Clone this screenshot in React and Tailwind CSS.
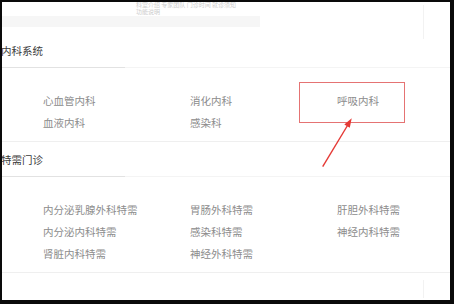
import React from 'react';

const font = { fontFamily: '"Noto Sans CJK SC", "Noto Sans", sans-serif' };

const sections = [
  {
    title: '内科系统',
    headClass: 'h-[27px] pt-[5px]',
    items: ['心血管内科', '消化内科', '呼吸内科', '血液内科', '感染科'],
  },
  {
    title: '特需门诊',
    headClass: 'h-[34px] pt-[12px]',
    items: [
      '内分泌乳腺外科特需',
      '胃肠外科特需',
      '肝胆外科特需',
      '内分泌内科特需',
      '感染科特需',
      '神经内科特需',
      '肾脏内科特需',
      '神经外科特需',
    ],
  },
];

const Section = ({ title, headClass, items }) => (
  <div className="border-b border-[#efefef]">
    {/* Heading */}
    <div className={headClass}>
      <div className="-ml-px text-[10.5px] leading-[12px] text-[#3a3a3a]">{title}</div>
    </div>
    <div className="flex h-px">
      <div className="w-[123px] bg-[#e2e2e2]" />
      <div className="flex-1 bg-[#f4f4f4]" />
    </div>

    {/* Items */}
    <div className="grid grid-cols-[147px_147px_1fr] pl-[41px] pt-[22px] pb-[7px]">
      {items.map((item) => (
        <div key={item} className="text-[10.5px] leading-[22px] text-[#8c8c8c] whitespace-nowrap">
          {item}
        </div>
      ))}
    </div>
  </div>
);

export default function App() {
  return (
    <div className="w-[454px] h-[304px] bg-[#0a0a0a] pt-[2px] pl-[2px] pr-[4px] pb-[4px]" style={font}>
      <div className="relative w-full h-full bg-white overflow-hidden">
        {/* Top faint area */}
        <div className="h-[38px]">
          <div className="h-[14px] pl-[134px] flex flex-col gap-px text-[6px] leading-[6px] text-[#cdcdcd]">
            <div>科室介绍 专家团队 门诊时间 就诊须知</div>
            <div>功能说明</div>
          </div>
          <div className="w-[258px] h-[11px] bg-[#f6f6f6]" />
        </div>

        {sections.map((s) => (
          <Section key={s.title} {...s} />
        ))}

        {/* faint vertical rules */}
        <div className="absolute left-[421px] top-[3px] w-px h-[34px] bg-[#f2f2f2]" />
        <div className="absolute left-[421px] top-[278px] w-px h-[18px] bg-[#f2f2f2]" />

        {/* Red annotation box */}
        <div className="absolute left-[297px] top-[80px] w-[106px] h-[41px] border border-[#e57373]" />

        {/* Red arrow */}
        <svg className="absolute left-0 top-0" width="448" height="298" viewBox="2 2 448 298">
          <line x1="322.7" y1="166.7" x2="347.5" y2="125.5" stroke="#e53935" strokeWidth="1.4" />
          <polygon points="351.7,118.3 349.8,127.8 344.3,124.4" fill="#e53935" />
        </svg>
      </div>
    </div>
  );
}
